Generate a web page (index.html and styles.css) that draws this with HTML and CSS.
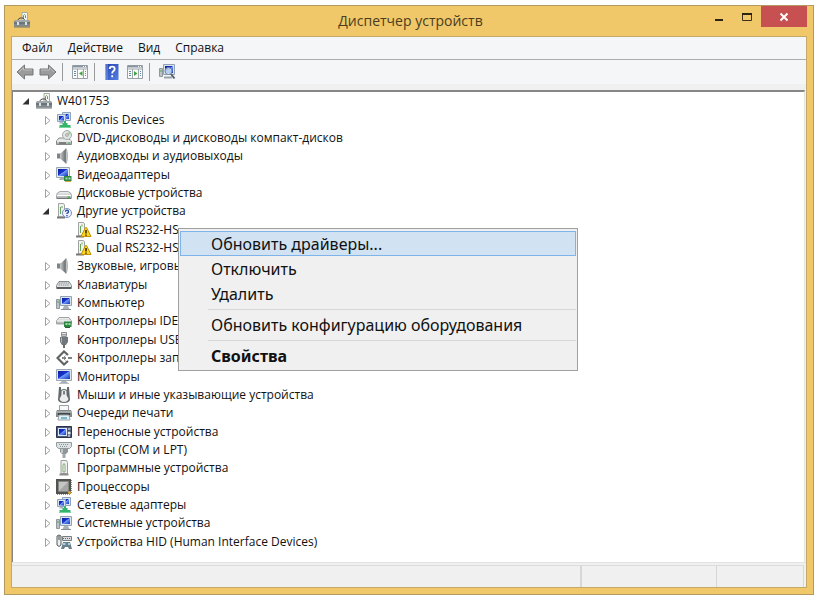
FILE: index.html
```html
<!DOCTYPE html>
<html lang="ru">
<head>
<meta charset="utf-8">
<title>Диспетчер устройств</title>
<link rel="stylesheet" href="styles.css">
</head>
<body>
<svg class="sprite" aria-hidden="true">
  <defs>
    <linearGradient id="metal" x1="0" y1="0" x2="0" y2="1"><stop offset="0" stop-color="#f4f5f5"/><stop offset="1" stop-color="#a4a8aa"/></linearGradient>
    <linearGradient id="dark" x1="0" y1="0" x2="1" y2="0"><stop offset="0" stop-color="#c9cccd"/><stop offset="1" stop-color="#606668"/></linearGradient>
    <linearGradient id="screen" x1="0" y1="0" x2="1" y2="1"><stop offset="0" stop-color="#0a1fa0"/><stop offset=".45" stop-color="#1a35d0"/><stop offset=".5" stop-color="#6f9cf5"/><stop offset="1" stop-color="#1230c0"/></linearGradient>
    <linearGradient id="blue" x1="0" y1="0" x2="1" y2="1"><stop offset="0" stop-color="#2342b4"/><stop offset="1" stop-color="#5580e0"/></linearGradient>
  </defs>
  <symbol id="closed" viewBox="0 0 16 16"><path d="M5.500 4.500v8l4.500-4z" fill="#fff" stroke="#a0a0a0"/></symbol>
  <symbol id="open" viewBox="0 0 16 16"><path d="M9 5v6.500H2.500z" fill="#303030"/></symbol>
  <symbol id="i-root" viewBox="0 0 16 16"><path d="M8 .5h5.500v8H8z" fill="#f2f4ee" stroke="#a9ada6"/><path d="M9.500 6V3.500q1-2 2 0V6" fill="none" stroke="#6d9a50"/><path d="M3.500 8l2.500-2h3l1.500 2" fill="none" stroke="#444"/><path d="M1 8h14l1 2v4.500H0V10z" fill="#7f888c"/><path d="M1.500 8.500h13l.5 1H1z" fill="#c3c9cc"/><path d="M0 11h16" stroke="#5b6367"/><path d="M3 10h2v3H3zM11 10h2v3h-2z" fill="#dde1e2"/><path d="M0 15h16" stroke="#6b7174"/></symbol>
  <symbol id="i-net" viewBox="0 0 16 16"><path d="M6.500.5h8v8h-8z" fill="#d6e2ef" stroke="#8ea4bb"/><path d="M8 2h5v5H8z" fill="url(#screen)"/><path d="M1.500 2.500h8v7h-8z" fill="#d6e2ef" stroke="#8ea4bb"/><path d="M3 4h5v4.500H3z" fill="url(#screen)"/><path d="M4 10h3l1 1.500H3z" fill="#a8b3bd"/><path d="M9 9v3" stroke="#35b46d" stroke-width="2"/><path d="M6.500 11h5v2h3v2h-11v-2h3z" fill="#35b46d"/><path d="M3 15.500h12" stroke="#75d49b"/></symbol>
  <symbol id="i-dvd" viewBox="0 0 16 16"><path d="M3 8h9l3.500 3v3.500H.5V11z" fill="url(#metal)" stroke="#85898a"/><circle cx="11" cy="5" r="4.500" fill="#dfe5e3" stroke="#a5aaa8"/><path d="M11 5l2-4a4 4 0 0 1 2 3z" fill="#a8cda2"/><circle cx="11" cy="5" r="1.300" fill="#fff" stroke="#999"/><path d="M1 11h14" stroke="#fff"/><path d="M3 13h7" stroke="#444"/><path d="M12 12.500h2v1h-2z" fill="#3bb54a"/></symbol>
  <symbol id="i-speaker" viewBox="0 0 16 16"><path d="M1 5.500h4v5H1z" fill="#7e8588"/><path d="M4 6l6-5.500v15L4 10.500z" fill="url(#dark)"/><path d="M10 .5c2 3 2 12 0 15z" fill="#d3d6d7" stroke="#9ea3a5" stroke-width=".7"/></symbol>
  <symbol id="i-video" viewBox="0 0 16 16"><path d="M.5.5h13v10H.5z" fill="#e2e8ed" stroke="#9aa7b1"/><path d="M2 2h10v7H2z" fill="url(#screen)"/><path d="M4 11h5v2H3z" fill="#aab1b5"/><path d="M8 9h7.500v5H8z" fill="#2c8741"/><path d="M9.500 10.500h2v2h-2zM12.500 10.500h2v2h-2z" fill="#a9dbb0"/><path d="M9 14.500h6" stroke="#d0a944"/></symbol>
  <symbol id="i-disk" viewBox="0 0 16 16"><path d="M4 6.500h8q3.500 1 3.500 4v3H.5v-3q0-3 3.500-4z" fill="url(#metal)" stroke="#a0a4a5"/><path d="M1 10.500h14" stroke="#fff"/><path d="M1 13.500h14" stroke="#707577"/><path d="M11.500 11.500h2.500v1.500h-2.500z" fill="#38ba47"/></symbol>
  <symbol id="i-other" viewBox="0 0 16 16"><path d="M2.500.5h5l1 1.500v12h-6z" fill="#f1f2f1" stroke="#9fa3a1"/><path d="M4.500 4v7M6 3v2" stroke="#68a65b"/><path d="M1 14.500h8" stroke="#777" stroke-width="2"/><circle cx="11" cy="10" r="4.500" fill="#eef4ff" stroke="#7890bd"/><path d="M9.500 8.800q0-1.600 1.500-1.600t1.500 1.500q0 .8-1.500 1.600v.7M11 12v1.200" fill="none" stroke="#233f9c" stroke-width="1.300"/></symbol>
  <symbol id="i-warn" viewBox="0 0 16 16"><path d="M2.500.5h5l1 1.500v12h-6z" fill="#f1f2f1" stroke="#9fa3a1"/><path d="M4.500 4v7M6 2.500v2" stroke="#68a65b"/><path d="M0 14.500h8" stroke="#777" stroke-width="2"/><path d="M9.500 5.500h1l4.500 9H5z" fill="#ffd421" stroke="#c29300" stroke-linejoin="round"/><path d="M10 8v3.500M10 12.500v1.200" stroke="#2b2400" stroke-width="1.500"/></symbol>
  <symbol id="i-keyboard" viewBox="0 0 16 16"><path d="M3 4.500h10l2.500 4v3H.5v-3z" fill="#dfe1e2" stroke="#858a8d" stroke-linejoin="round"/><path d="M3 6h10M2.500 8h11" stroke="#8d9396" stroke-dasharray="1.500 .7"/><path d="M1 11h14" stroke="#575d61" stroke-width="2"/></symbol>
  <symbol id="i-computer" viewBox="0 0 16 16"><path d="M.5 4.500h3v9h-3z" fill="#bcc3c6" stroke="#8f989c"/><path d="M1 7h2" stroke="#48ad51"/><path d="M4.500 1.500h11v9h-11z" fill="#dce4eb" stroke="#92a2b2"/><path d="M6 3h8v6H6z" fill="url(#screen)"/><path d="M8 11h4l1.500 3h-7z" fill="#a9b1b7"/><path d="M5 14.500h10" stroke="#858e94"/></symbol>
  <symbol id="i-ide" viewBox="0 0 16 16"><path d="M3 4.500h10l2.500 3.500v3H.5V8z" fill="url(#metal)" stroke="#a0a4a5"/><path d="M1 8h14" stroke="#fff"/><path d="M8 8.500h7.500V14H8z" fill="#2c8741"/><path d="M9.500 10h2v2h-2zM12.500 10h2v2h-2z" fill="#a9dbb0"/><path d="M9 14.500h5" stroke="#315b37"/></symbol>
  <symbol id="i-usb" viewBox="0 0 16 16"><path d="M5.500.5h5v4h-5z" fill="#e6e8e9" stroke="#8a8f91"/><path d="M7 2v1.500M9 2v1.500" stroke="#555"/><path d="M4 5h8v5l-2 3H6l-2-3z" fill="#71787b"/><path d="M5.500 5.500v5" stroke="#b1b6b8"/><path d="M8 12v4" stroke="#696e70" stroke-width="2"/></symbol>
  <symbol id="i-storage" viewBox="0 0 16 16"><path d="M12 5L8 1.500 1.500 8 8 14.500 12 11" fill="none" stroke="#606465" stroke-width="2.200"/><path d="M6 8h4M12 8h4" stroke="#7e8384" stroke-width="2"/><path d="M9.500 5.500L7 8l2.500 2.500" fill="none" stroke="#909596"/></symbol>
  <symbol id="i-monitor" viewBox="0 0 16 16"><path d="M.5.500h15v11H.5z" fill="#e0e6eb" stroke="#9aa7b1"/><path d="M2 2h12v8H2z" fill="url(#screen)"/><path d="M6 12h4l2 2H4z" fill="#a8b0b6"/><path d="M3 14.500h10" stroke="#b9c0c4"/></symbol>
  <symbol id="i-mouse" viewBox="0 0 16 16"><path d="M3 0h2v3q3-2 6 0V0h2l1 13q-1 3-6 3t-6-3z" fill="#62696c"/><path d="M5.500 4q2.500-2 5 0v4l2 4q-1 3-4.500 3t-4.500-3l2-4z" fill="#eceeee"/><path d="M8 4v3.500" stroke="#53595b" stroke-width="1.500"/></symbol>
  <symbol id="i-printer" viewBox="0 0 16 16"><path d="M3.500.5h9v5h-9z" fill="#f7f8f8" stroke="#999fa1"/><path d="M1 5h14l1 2v5H0V7z" fill="#83898b"/><path d="M0 7h16" stroke="#c6cacb"/><path d="M2 9h12" stroke="#3f4547" stroke-width="2"/><path d="M3 10h10l1 5H2z" fill="#e7f1f5" stroke="#9ba2a5"/><path d="M5 12h6v2H5z" fill="#78b9cf"/></symbol>
  <symbol id="i-portable" viewBox="0 0 16 16"><path d="M.5 2.500h15v11H.5z" fill="#4e5a75" stroke="#283450"/><path d="M2 4h9v8H2z" fill="#dce8fa"/><path d="M3 5h7v6H3z" fill="url(#screen)"/><circle cx="13.200" cy="9" r="1.500" fill="#e4e8f0"/><path d="M12 5h2.500M12 12h2" stroke="#fff"/></symbol>
  <symbol id="i-port" viewBox="0 0 16 16"><path d="M.5.500h15v4l-2 2h-11l-2-2z" fill="#dce1e3" stroke="#929a9d"/><path d="M3 2.500h10M4 4.500h8" stroke="#8a9398" stroke-dasharray="1 1"/><path d="M4 7h8v3l-2 2H6l-2-2z" fill="#8f979a"/><path d="M6 7v4" stroke="#d3d8da" stroke-width="1.500"/><path d="M8 12v4" stroke="#a1a8ab" stroke-width="3"/></symbol>
  <symbol id="i-soft" viewBox="0 0 16 16"><path d="M5 .5h5.500l1 2v11H5z" fill="#eef1ed" stroke="#9a9f99"/><path d="M7 5q1-3 2 0v7H7z" fill="#fff" stroke="#87a67b"/><path d="M3.500 14.500h9" stroke="#8a8d8a" stroke-width="2"/></symbol>
  <symbol id="i-cpu" viewBox="0 0 16 16"><path d="M0 0h15v15H0z" fill="#52524e"/><path d="M1 15.500h14M15.500 1v14" stroke="#b18d37" stroke-dasharray="1 1"/><path d="M2.500 2.500h10v10h-10z" fill="#a5a7a6" stroke="#858785"/><path d="M3 3h9l-9 9z" fill="#c4c6c5"/><circle cx="13.500" cy="13.500" r="1.500" fill="#e2aa2a"/></symbol>
  <symbol id="i-hid" viewBox="0 0 16 16"><path d="M1 2q2-2 4 0v9q-2 3-4 0z" fill="#eceeee" stroke="#555b5d"/><path d="M3 2v4" stroke="#444"/><path d="M6.500 2.500h9v4h-9z" fill="#dadddd" stroke="#777d80"/><path d="M7 4.500h8" stroke="#666" stroke-dasharray="1 1"/><path d="M7 8h7l2 7h-3l-1-2H9l-1 2H5z" fill="#67818d"/><path d="M7 10h2.500M12 10h2" stroke="#c4e8f4" stroke-width="1.500"/></symbol>
  <symbol id="t-arrow" viewBox="0 0 18 16"><path d="M1 8l7.500-7v4H17v6H8.500v4z" fill="#9b9b9b" stroke="#777" stroke-linejoin="round"/><path d="M3 8l4.500-4.500v2.500H16" fill="none" stroke="#bebebe"/></symbol>
  <symbol id="t-panel" viewBox="0 0 16 16"><path d="M.5 1.500h15v13H.5z" fill="#fafbfa" stroke="#98a0a5"/><path d="M1 2.500h14" stroke="#8895a0" stroke-width="2"/><path d="M11 2.500h1M13 2.500h1" stroke="#fff"/><path d="M1 5h14M5.500 5v9M11.500 5v9" stroke="#9ca5aa"/><path d="M2 7.500h2M2 9.500h2M2 11.500h2M13 7.500h1M13 9.500h1M13 11.500h1" stroke="#5f8cae"/></symbol>
</svg>

<main class="window">
  <header class="titlebar">
    <svg class="icon"><use href="#i-root"/></svg>
    <h1>Диспетчер устройств</h1>
    <div class="controls">
      <button type="button" aria-label="Свернуть"><svg viewBox="0 0 12 12"><path d="M2 9h8" stroke="#2b2415" stroke-width="2"/></svg></button>
      <button type="button" aria-label="Развернуть"><svg viewBox="0 0 12 12"><path d="M1.500 2.500h9v7h-9z" fill="none" stroke="#3b311b"/><path d="M1 3h10" stroke="#2b2415" stroke-width="2"/></svg></button>
      <button type="button" class="close" aria-label="Закрыть"><svg viewBox="0 0 12 12"><path d="M2.500 2.500l7 7M9.500 2.500l-7 7" stroke="#fff" stroke-width="2"/></svg></button>
    </div>
  </header>

  <div class="client">
    <nav class="menubar">
      <button type="button">Файл</button>
      <button type="button">Действие</button>
      <button type="button">Вид</button>
      <button type="button">Справка</button>
    </nav>

    <div class="toolbar">
      <button type="button" aria-label="Назад"><svg><use href="#t-arrow"/></svg></button>
      <button type="button" class="flip" aria-label="Вперёд"><svg><use href="#t-arrow"/></svg></button>
      <span class="divider"></span>
      <button type="button" aria-label="Дерево консоли"><svg viewBox="0 0 16 16"><use href="#t-panel"/><path d="M10.500 7v5L7 9.500z" fill="#3fa43d"/></svg></button>
      <span class="divider"></span>
      <button type="button" aria-label="Справка"><svg viewBox="0 0 16 16"><path d="M1.500 0h13v16h-13z" fill="url(#blue)"/><path d="M3 0v16" stroke="#7f9ce4"/><path d="M5.700 5q0-2.300 2.500-2.300T10.700 5q0 1.300-1.500 2.200-1 .7-1 2.300M8.200 11.300v2" fill="none" stroke="#fff" stroke-width="1.800"/></svg></button>
      <button type="button" aria-label="Панель действий"><svg viewBox="0 0 16 16"><use href="#t-panel"/><path d="M7 7v5l3.500-2.500z" fill="#3fa43d"/></svg></button>
      <span class="divider"></span>
      <button type="button" aria-label="Обновить конфигурацию"><svg viewBox="0 0 16 16"><path d="M.5 4.500h3v8h-3z" fill="#bcc3c6" stroke="#8f989c"/><path d="M1 7h2" stroke="#48ad51"/><path d="M4.500.5h11v10h-11z" fill="#dce4eb" stroke="#92a2b2"/><path d="M6 2h8v7H6z" fill="url(#screen)"/><path d="M5 13.500h8" stroke="#9aa3a9" stroke-width="2"/><circle cx="9.500" cy="7" r="3.500" fill="#c8ddf5" fill-opacity=".85" stroke="#788795"/><path d="M12 10l3.500 4.500" stroke="#56616b" stroke-width="2"/></svg></button>
    </div>

    <section class="pane">
      <ul class="tree" role="tree" aria-label="Устройства">
        <li class="root" role="treeitem" aria-level="1" aria-expanded="true"><svg class="icon"><use href="#open"/></svg><svg class="icon"><use href="#i-root"/></svg><span>W401753</span></li>
        <li role="treeitem" aria-level="2"><svg class="icon"><use href="#closed"/></svg><svg class="icon"><use href="#i-net"/></svg><span>Acronis Devices</span></li>
        <li role="treeitem" aria-level="2"><svg class="icon"><use href="#closed"/></svg><svg class="icon"><use href="#i-dvd"/></svg><span>DVD-дисководы и дисководы компакт-дисков</span></li>
        <li role="treeitem" aria-level="2"><svg class="icon"><use href="#closed"/></svg><svg class="icon"><use href="#i-speaker"/></svg><span>Аудиовходы и аудиовыходы</span></li>
        <li role="treeitem" aria-level="2"><svg class="icon"><use href="#closed"/></svg><svg class="icon"><use href="#i-video"/></svg><span>Видеоадаптеры</span></li>
        <li role="treeitem" aria-level="2"><svg class="icon"><use href="#closed"/></svg><svg class="icon"><use href="#i-disk"/></svg><span>Дисковые устройства</span></li>
        <li role="treeitem" aria-level="2" aria-expanded="true"><svg class="icon"><use href="#open"/></svg><svg class="icon"><use href="#i-other"/></svg><span>Другие устройства</span></li>
        <li class="leaf" role="treeitem" aria-level="3"><svg class="icon"><use href="#i-warn"/></svg><span>Dual RS232-HS</span></li>
        <li class="leaf" role="treeitem" aria-level="3"><svg class="icon"><use href="#i-warn"/></svg><span>Dual RS232-HS</span></li>
        <li role="treeitem" aria-level="2"><svg class="icon"><use href="#closed"/></svg><svg class="icon"><use href="#i-speaker"/></svg><span>Звуковые, игровы</span></li>
        <li role="treeitem" aria-level="2"><svg class="icon"><use href="#closed"/></svg><svg class="icon"><use href="#i-keyboard"/></svg><span>Клавиатуры</span></li>
        <li role="treeitem" aria-level="2"><svg class="icon"><use href="#closed"/></svg><svg class="icon"><use href="#i-computer"/></svg><span>Компьютер</span></li>
        <li role="treeitem" aria-level="2"><svg class="icon"><use href="#closed"/></svg><svg class="icon"><use href="#i-ide"/></svg><span>Контроллеры IDE</span></li>
        <li role="treeitem" aria-level="2"><svg class="icon"><use href="#closed"/></svg><svg class="icon"><use href="#i-usb"/></svg><span>Контроллеры USB</span></li>
        <li role="treeitem" aria-level="2"><svg class="icon"><use href="#closed"/></svg><svg class="icon"><use href="#i-storage"/></svg><span>Контроллеры запо</span></li>
        <li role="treeitem" aria-level="2"><svg class="icon"><use href="#closed"/></svg><svg class="icon"><use href="#i-monitor"/></svg><span>Мониторы</span></li>
        <li role="treeitem" aria-level="2"><svg class="icon"><use href="#closed"/></svg><svg class="icon"><use href="#i-mouse"/></svg><span>Мыши и иные указывающие устройства</span></li>
        <li role="treeitem" aria-level="2"><svg class="icon"><use href="#closed"/></svg><svg class="icon"><use href="#i-printer"/></svg><span>Очереди печати</span></li>
        <li role="treeitem" aria-level="2"><svg class="icon"><use href="#closed"/></svg><svg class="icon"><use href="#i-portable"/></svg><span>Переносные устройства</span></li>
        <li role="treeitem" aria-level="2"><svg class="icon"><use href="#closed"/></svg><svg class="icon"><use href="#i-port"/></svg><span>Порты (COM и LPT)</span></li>
        <li role="treeitem" aria-level="2"><svg class="icon"><use href="#closed"/></svg><svg class="icon"><use href="#i-soft"/></svg><span>Программные устройства</span></li>
        <li role="treeitem" aria-level="2"><svg class="icon"><use href="#closed"/></svg><svg class="icon"><use href="#i-cpu"/></svg><span>Процессоры</span></li>
        <li role="treeitem" aria-level="2"><svg class="icon"><use href="#closed"/></svg><svg class="icon"><use href="#i-net"/></svg><span>Сетевые адаптеры</span></li>
        <li role="treeitem" aria-level="2"><svg class="icon"><use href="#closed"/></svg><svg class="icon"><use href="#i-computer"/></svg><span>Системные устройства</span></li>
        <li role="treeitem" aria-level="2"><svg class="icon"><use href="#closed"/></svg><svg class="icon"><use href="#i-hid"/></svg><span>Устройства HID (Human Interface Devices)</span></li>
      </ul>

      <div class="context" role="menu">
        <button type="button" role="menuitem" class="active">Обновить драйверы...</button>
        <button type="button" role="menuitem">Отключить</button>
        <button type="button" role="menuitem">Удалить</button>
        <hr>
        <button type="button" role="menuitem">Обновить конфигурацию оборудования</button>
        <hr>
        <button type="button" role="menuitem" class="default">Свойства</button>
      </div>
    </section>

    <footer class="status"><span></span><span></span><span></span></footer>
  </div>
</main>
</body>
</html>
```
FILE: styles.css
```css
* { box-sizing: border-box; }

body {
  margin: 0;
  min-height: 100vh;
  display: flex;
  padding: 5px 6px 6px 4px;
  background: #fff;
  color: #111;
  font: 12px/16px "Open Sans", "Noto Sans", sans-serif;
}

button {
  margin: 0;
  padding: 0;
  border: 0;
  background: none;
  color: inherit;
  font: inherit;
}

.sprite { position: absolute; width: 0; height: 0; }

.icon { width: 16px; height: 16px; flex: none; }

.window {
  flex: 1;
  min-width: 0;
  display: flex;
  flex-direction: column;
  padding: 0 6px 6px;
  border: 1px solid #b09a60;
  background: #f0c869;
}

.titlebar {
  display: grid;
  grid-template-columns: 1fr auto 1fr;
  height: 30px;
  padding-left: 3px;
}

.titlebar > .icon { margin-top: 6px; }

.titlebar h1 {
  margin: 0;
  color: #4a3d20;
  font-size: 14px;
  font-weight: 400;
  line-height: 30px;
}

.controls {
  display: flex;
  justify-content: flex-end;
  align-items: flex-start;
}

.controls button {
  display: flex;
  width: 28px;
  height: 21px;
  align-items: center;
  justify-content: center;
}

.controls .close { width: 46px; background: #c75050; }

.controls svg { width: 12px; height: 12px; }

.client {
  flex: 1;
  display: flex;
  flex-direction: column;
  border: 1px solid #c4a967;
  background: #f0f0f0;
}

.menubar {
  display: flex;
  gap: 15px;
  height: 23px;
  padding-left: 10px;
  border-bottom: 1px solid #aaadb0;
  background: #f5f6f7;
}

.toolbar {
  display: flex;
  align-items: center;
  gap: 5px;
  height: 24px;
  margin-bottom: 6px;
  padding-left: 4px;
  background: #f5f6f7;
}

.toolbar button { display: flex; }

.toolbar svg { width: 18px; height: 16px; }

.flip svg { transform: scaleX(-1); }

.divider { width: 1px; height: 18px; margin-right: 3px; background: #999; }

.pane {
  position: relative;
  flex: 1;
  display: flex;
  margin-right: 1px;
  border: solid #868686;
  border-width: 2px 0 0 1px;
  border-right: 1px solid #e3e3e3;
  background: #fff;
}

.tree {
  flex: 1;
  display: grid;
  grid-auto-rows: minmax(16px, 1fr);
  margin: 0;
  padding: 0 0 11px 27px;
  list-style: none;
}

.tree li {
  display: flex;
  align-items: center;
  white-space: nowrap;
}

.tree .root { margin-left: -20px; }

.tree .leaf { padding-left: 36px; }

.tree span { margin-left: 5px; }

.tree .leaf span { margin-left: 4px; }

.context {
  position: absolute;
  left: 165px;
  top: 136px;
  display: flex;
  flex-direction: column;
  width: 400px;
  padding: 2px 1px;
  border: 1px solid #a0a0a0;
  background: #f0f0f0;
  font-family: "Noto Sans", "Open Sans", sans-serif;
  font-size: 16px;
}

.context button {
  height: 25px;
  padding: 2px 30px 0;
  border: 1px solid transparent;
  line-height: 21px;
  text-align: left;
}

.context .active { border-color: #7eb4ea; background: #d1e2f2; }

.context .default { font-weight: 700; }

.context hr {
  width: calc(100% - 28px);
  height: 1px;
  margin: 3px 0 2px 28px;
  border: 0;
  background: #d7d7d7;
}

.status {
  display: flex;
  height: 25px;
  padding-top: 2px;
  border-top: 1px solid #e2e2e2;
}

.status span { border-top: 1px solid #dcdcdc; border-right: 1px solid #d7d7d7; }
.status span:nth-child(1) { flex: 1; border-right-width: 2px; }
.status span:nth-child(2) { width: 135px; }
.status span:nth-child(3) { width: 87px; margin-right: 2px; }
```
